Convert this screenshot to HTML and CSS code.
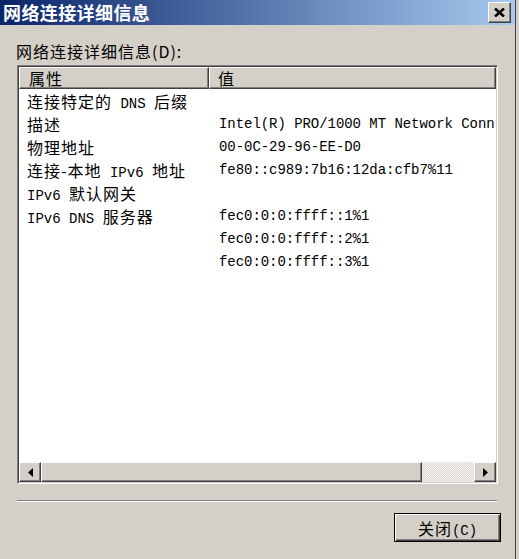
FILE: index.html
```html
<!DOCTYPE html>
<html lang="zh-CN">
<head>
<meta charset="utf-8">
<title>网络连接详细信息</title>
<link rel="stylesheet" href="styles.css">
</head>
<body>
<div class="window">
  <div class="titlebar">
    <span class="title">网络连接详细信息</span>
    <button class="close" aria-label="关闭">
      <svg width="11" height="9" viewBox="0 0 11 9"><path d="M1 0.5 L10 8.5 M10 0.5 L1 8.5" stroke="#000" stroke-width="2.6" fill="none"/></svg>
    </button>
  </div>
  <div class="content">
    <div class="label">网络连接详细信息(D):</div>
    <div class="list">
      <div class="header">
        <div class="hcell c1">属性</div>
        <div class="hcell c2">值</div>
      </div>
      <div class="rows">
        <div class="row"><span class="k"><span class="zh">连接特定的</span> DNS <span class="zh">后缀</span></span><span class="v"></span></div>
        <div class="row"><span class="k"><span class="zh">描述</span></span><span class="v">Intel(R) PRO/1000 MT Network Conn</span></div>
        <div class="row"><span class="k"><span class="zh">物理地址</span></span><span class="v">00-0C-29-96-EE-D0</span></div>
        <div class="row"><span class="k"><span class="zh">连接-本地</span> IPv6 <span class="zh">地址</span></span><span class="v">fe80::c989:7b16:12da:cfb7%11</span></div>
        <div class="row"><span class="k">IPv6 <span class="zh">默认网关</span></span><span class="v"></span></div>
        <div class="row"><span class="k">IPv6 DNS <span class="zh">服务器</span></span><span class="v">fec0:0:0:ffff::1%1</span></div>
        <div class="row"><span class="k"></span><span class="v">fec0:0:0:ffff::2%1</span></div>
        <div class="row"><span class="k"></span><span class="v">fec0:0:0:ffff::3%1</span></div>
      </div>
      <div class="hscroll">
        <div class="sbtn"><svg width="5" height="9" viewBox="0 0 5 9"><polygon points="5,0 5,9 0,4.5" fill="#000"/></svg></div>
        <div class="thumb"></div>
        <div class="track"></div>
        <div class="sbtn"><svg width="5" height="9" viewBox="0 0 5 9"><polygon points="0,0 0,9 5,4.5" fill="#000"/></svg></div>
      </div>
    </div>
    <div class="sep"></div>
    <div class="footer">
      <button class="btn"><span class="zh">关闭</span>(C)</button>
    </div>
  </div>
</div>
</body>
</html>
```
FILE: styles.css
```css
* { box-sizing: border-box; }

body {
  margin: 0;
  background: #d4d0c8;
  color: #000;
  font-family: "Liberation Mono", "Noto Sans CJK SC", monospace;
}

.window {
  width: 516px;
  height: 559px;
  border-right: 1px solid #404040;
  display: flex;
  flex-direction: column;
}

.titlebar {
  height: 25px;
  background: linear-gradient(to right, #0a246a, #a6caf0);
  display: flex;
  align-items: center;
  justify-content: space-between;
  padding: 0 4px 0 3px;
}

.title {
  color: #fff;
  font-family: "Noto Sans CJK SC", sans-serif;
  font-weight: bold;
  font-size: 18px;
  line-height: 25px;
  letter-spacing: 0.4px;
}

.close {
  width: 23px;
  height: 21px;
  padding: 0;
  background: #d4d0c8;
  border: 1px solid;
  border-color: #fff #404040 #404040 #fff;
  box-shadow: inset -1px -1px #808080;
  display: flex;
  align-items: center;
  justify-content: center;
}

.content {
  flex: 1;
  display: flex;
  flex-direction: column;
  padding: 0 17px;
}

.label {
  margin-top: 15px;
  height: 22px;
  line-height: 22px;
  font-family: "Noto Sans CJK SC", sans-serif;
  font-size: 16px;
  letter-spacing: 1px;
  margin-left: -1px;
}

.zh {
  font-family: "Noto Sans CJK SC", sans-serif;
  font-size: 16px;
  letter-spacing: 1px;
}

.list {
  margin-top: 3px;
  height: 419px;
  display: flex;
  flex-direction: column;
  background: #fff;
  border: 1px solid;
  border-color: #808080 #fff #fff #808080;
  box-shadow: inset 1px 1px #404040, inset -1px -1px #d4d0c8;
  padding: 1px;
}

.header {
  display: flex;
  height: 22px;
  background: #d4d0c8;
}

.hcell {
  border: 1px solid;
  border-color: #fff #404040 #404040 #fff;
  box-shadow: inset -1px -1px #808080;
  line-height: 20px;
  font-family: "Noto Sans CJK SC", sans-serif;
  font-size: 16px;
  letter-spacing: 1px;
}

.hcell.c1 { width: 190px; padding-left: 9px; }
.hcell.c2 { flex: 1; padding-left: 8px; }

.rows {
  flex: 1;
  overflow: hidden;
  padding-top: 1px;
  font-size: 14px;
}

.row {
  display: grid;
  grid-template-columns: 190px 1fr;
  height: 23px;
  line-height: 23px;
  white-space: nowrap;
}

.row .k { padding-left: 8px; }
.row .v { padding-left: 10px; overflow: hidden; letter-spacing: -0.05px; }

.hscroll {
  height: 20px;
  display: flex;
}

.sbtn,
.thumb {
  background: #d4d0c8;
  border: 1px solid;
  border-color: #fff #404040 #404040 #fff;
  box-shadow: inset -1px -1px #808080;
}

.sbtn {
  width: 22px;
  display: flex;
  align-items: center;
  justify-content: center;
}

.thumb { width: 381px; }

.track {
  flex: 1;
  background: repeating-conic-gradient(#d4d0c8 0 25%, #fff 0 50%) 0 0 / 2px 2px;
}

.sep {
  margin-top: 16px;
  border-top: 1px solid #808080;
  border-bottom: 1px solid #fff;
  margin-right: 1px;
}

.footer {
  display: flex;
  justify-content: flex-end;
  margin-top: 11px;
  margin-right: -3px;
}

.btn {
  width: 107px;
  height: 29px;
  padding: 0;
  border: 1px solid #000;
  background: #d4d0c8;
  box-shadow: inset 1px 1px #fff, inset -1px -1px #404040, inset -2px -2px #808080;
  font-family: "Liberation Mono", "Noto Sans CJK SC", monospace;
  font-size: 14px;
  color: #000;
}
```
